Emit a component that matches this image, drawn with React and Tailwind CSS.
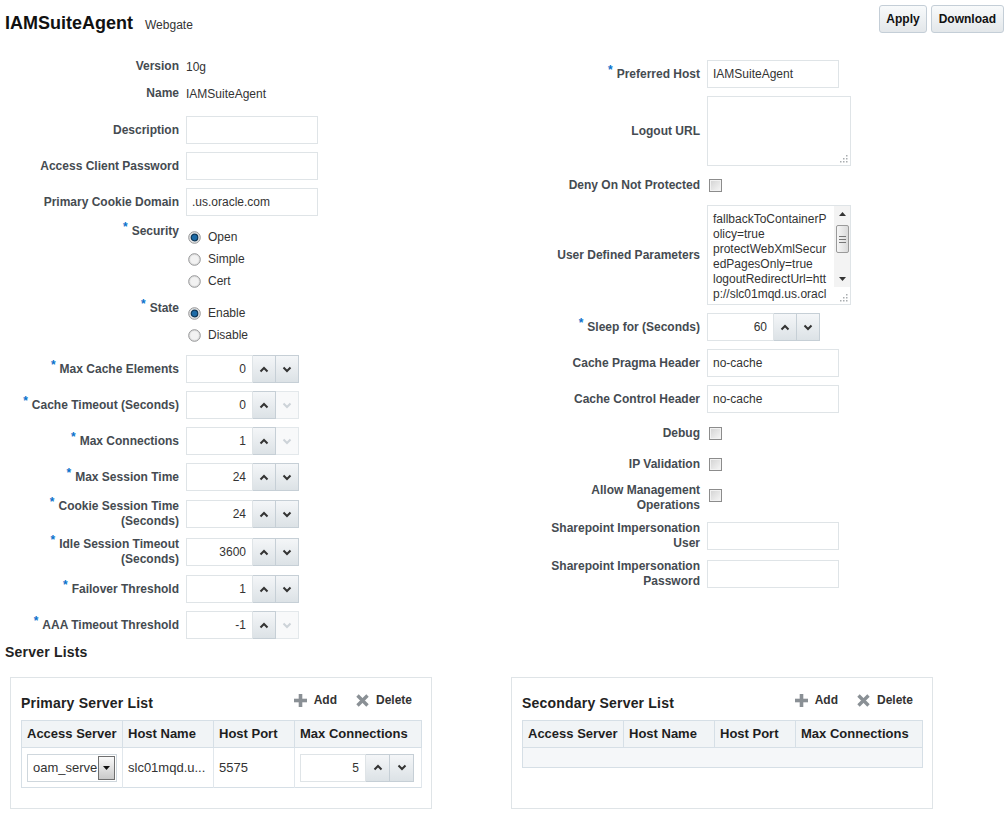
import React from 'react'

const labelCls = 'shrink-0 text-right text-[12px] font-bold leading-[15px] text-[#454b51]'

function Star() {
  return <span className="relative top-[-4px] mr-[4px] text-[12px] leading-[0] font-bold text-[#0b72cc]">*</span>
}

function Row({ label, req, children, lw = 'w-[179px]' }) {
  return (
    <div className="flex items-center py-[4px]">
      <div className={`${lw} ${labelCls}`}>
        {req && <Star />}
        {label}
      </div>
      <div className="ml-[7px]">{children}</div>
    </div>
  )
}

function TextBox({ value = '', w = 'w-[132px]' }) {
  return (
    <input
      readOnly
      defaultValue={value}
      className={`${w} block h-[28px] border border-[#dfe4e7] bg-white px-[5px] text-[12px] text-[#333] outline-none`}
    />
  )
}

function Chevron({ up, color = '#333' }) {
  return (
    <svg width="10" height="7" viewBox="0 0 10 7">
      <path
        d={up ? 'M1.5 5.5 L5 2 L8.5 5.5' : 'M1.5 1.5 L5 5 L8.5 1.5'}
        fill="none"
        stroke={color}
        strokeWidth="2"
      />
    </svg>
  )
}

function Spin({ value, downOff, iw = 'w-[67px]', bw = 'w-[23px]' }) {
  return (
    <div className="flex h-[28px]">
      <input
        readOnly
        defaultValue={value}
        className={`${iw} block h-full border border-[#dfe4e7] bg-white pr-[6px] text-right text-[12px] text-[#333] outline-none`}
      />
      <button className={`${bw} flex h-full items-center justify-center border border-l-0 border-[#c6cfd6] bg-gradient-to-b from-[#f4f6f8] to-[#dce2e6]`}>
        <Chevron up />
      </button>
      {downOff ? (
        <button className={`${bw} flex h-full items-center justify-center border border-l-0 border-[#e3e8eb] bg-[#f8f9fa]`}>
          <Chevron color="#cdd3d8" />
        </button>
      ) : (
        <button className={`${bw} flex h-full items-center justify-center border border-l-0 border-[#c6cfd6] bg-gradient-to-b from-[#f4f6f8] to-[#dce2e6]`}>
          <Chevron />
        </button>
      )}
    </div>
  )
}

function Radio({ on, children }) {
  return (
    <div className="flex h-[22px] items-center pl-[2px]">
      <svg width="13" height="13" viewBox="0 0 13 13">
        <circle cx="6.5" cy="6.5" r="5.8" fill="#e3e3e3" stroke="#959697" strokeWidth="1" />
        <circle cx="6.5" cy="6.5" r="4.2" fill="#f2f2f2" />
        {on && <circle cx="6.5" cy="6.5" r="3.3" fill="#1c6aa6" stroke="#0c3556" strokeWidth="1.2" />}
      </svg>
      <span className="ml-[7px] text-[12px] text-[#333]">{children}</span>
    </div>
  )
}

function Check({ shift }) {
  return (
    <span
      className={`ml-[2px] block h-[13px] w-[13px] border border-[#8c8c8c] bg-gradient-to-br from-[#d2d2d2] to-[#f7f7f7] shadow-[inset_0_0_0_1px_#f2f2f2] ${shift ? 'relative top-[-3px]' : ''}`}
    />
  )
}

function Grip() {
  return (
    <svg width="9" height="9" viewBox="0 0 9 9" className="absolute bottom-[2px] right-[2px]">
      <g fill="#a9adb0">
        <rect x="7" y="1" width="1.5" height="1.5" />
        <rect x="4" y="4" width="1.5" height="1.5" />
        <rect x="7" y="4" width="1.5" height="1.5" />
        <rect x="1" y="7" width="1.5" height="1.5" />
        <rect x="4" y="7" width="1.5" height="1.5" />
        <rect x="7" y="7" width="1.5" height="1.5" />
      </g>
    </svg>
  )
}

const params = [
  'fallbackToContainerP',
  'olicy=true',
  'protectWebXmlSecur',
  'edPagesOnly=true',
  'logoutRedirectUrl=htt',
  'p://slc01mqd.us.oracl',
]

function ParamsArea() {
  return (
    <div className="relative flex h-[100px] w-[144px] border border-[#dfe4e7] bg-white">
      <div className="flex-1 overflow-hidden pl-[5px] pt-[6px] text-[12px] leading-[15px] text-[#333]">
        {params.map((l) => (
          <div key={l} className="whitespace-nowrap">{l}</div>
        ))}
      </div>
      <div className="flex h-[81px] w-[16px] flex-col items-center bg-[#f3f3f3]">
        <div className="flex h-[16px] items-center justify-center">
          <svg width="7" height="4" viewBox="0 0 7 4"><path d="M0 4 L3.5 0 L7 4 Z" fill="#333" /></svg>
        </div>
        <div className="mt-[3px] flex h-[28px] w-[13px] flex-col items-center justify-center gap-[2px] rounded-[2px] border border-[#9a9a9a] bg-gradient-to-r from-[#f6f6f6] to-[#dadada]">
          <span className="h-[1px] w-[7px] bg-[#777]" />
          <span className="h-[1px] w-[7px] bg-[#777]" />
          <span className="h-[1px] w-[7px] bg-[#777]" />
        </div>
        <div className="flex-1" />
        <div className="flex h-[16px] items-center justify-center">
          <svg width="7" height="4" viewBox="0 0 7 4"><path d="M0 0 L3.5 4 L7 0 Z" fill="#333" /></svg>
        </div>
      </div>
      <Grip />
    </div>
  )
}

function PlusIcon() {
  return (
    <svg width="13" height="13" viewBox="0 0 13 13">
      <rect x="4.7" y="0" width="3.6" height="13" fill="#8a9095" />
      <rect x="0" y="4.7" width="13" height="3.6" fill="#8a9095" />
    </svg>
  )
}

function XIcon() {
  return (
    <svg width="13" height="13" viewBox="0 0 13 13">
      <path d="M1.5 1.5 L11.5 11.5 M11.5 1.5 L1.5 11.5" stroke="#8a9095" strokeWidth="3.4" />
    </svg>
  )
}

const cols = ['Access Server', 'Host Name', 'Host Port', 'Max Connections']
const th = 'h-[27px] border-b border-r border-[#d6dfe6] bg-[#f1f4f6] px-[5px] text-left text-[13px] font-bold text-[#1e1e1e] whitespace-nowrap'
const td = 'h-[40px] border-r border-[#e1e7ec] px-[5px] text-[13px] text-[#333]'

function ServerPanel({ title, filled }) {
  return (
    <div className="h-[132px] w-[422px] border border-[#dfe4e7] px-[10px] pt-[16px]">
      <div className="flex h-[26px] items-start justify-between">
        <div className="text-[14px] font-bold leading-[18px] tracking-[0.2px] text-[#222]">{title}</div>
        <div className="mr-[9px] -mt-[1px] flex items-center text-[12px] font-bold leading-[14px] text-[#333]">
          <PlusIcon />
          <span className="ml-[7px]">Add</span>
          <span className="ml-[19px]"><XIcon /></span>
          <span className="ml-[7px]">Delete</span>
        </div>
      </div>
      <table className="w-[400px] table-fixed border-collapse border border-[#d6dfe6]">
        <colgroup>
          <col className="w-[101px]" />
          <col className="w-[91px]" />
          <col className="w-[81px]" />
          <col className="w-[127px]" />
        </colgroup>
        <thead>
          <tr>
            {cols.map((c) => (
              <th key={c} className={th}>{c}</th>
            ))}
          </tr>
        </thead>
        <tbody>
          {filled ? (
            <tr className="bg-white">
              <td className={td}>
                <div className="flex h-[28px] w-[90px] items-center border border-[#cfd7dd] bg-white pl-[5px] pr-[1px]">
                  <span className="flex-1 overflow-hidden whitespace-nowrap">oam_serve</span>
                  <span className="flex h-[24px] w-[17px] items-center justify-center border border-[#6f6f6f] bg-gradient-to-b from-[#fafafa] to-[#c9c9c9]">
                    <svg width="7" height="4" viewBox="0 0 7 4"><path d="M0 0 L3.5 4 L7 0 Z" fill="#111" /></svg>
                  </span>
                </div>
              </td>
              <td className={td}>slc01mqd.u...</td>
              <td className={td}>5575</td>
              <td className={td}>
                <Spin value="5" iw="w-[66px]" bw="w-[24px]" />
              </td>
            </tr>
          ) : (
            <tr>
              <td colSpan={4} className="h-[20px] bg-[#f5f7f9]" />
            </tr>
          )}
        </tbody>
      </table>
    </div>
  )
}

export default function App() {
  return (
    <div className="min-h-[818px] bg-white font-['Liberation_Sans',Arial,sans-serif] text-[#333]">
      {/* title bar */}
      <div className="flex justify-between pl-[5px] pr-[3px] pt-[5px]">
        <div className="mt-[8px] flex items-baseline">
          <h1 className="text-[18px] font-bold leading-[21px] text-[#111]">IAMSuiteAgent</h1>
          <span className="ml-[12px] text-[12px] text-[#333]">Webgate</span>
        </div>
        <div className="flex gap-[4px]">
          <button className="h-[28px] rounded-[3px] border border-[#c4ced7] bg-gradient-to-b from-[#f8fafb] to-[#e3e7ea] px-[6px] text-[12px] font-bold text-[#111]">
            Apply
          </button>
          <button className="h-[28px] rounded-[3px] border border-[#c4ced7] bg-gradient-to-b from-[#f8fafb] to-[#e3e7ea] px-[7px] text-[12px] font-bold text-[#111]">
            Download
          </button>
        </div>
      </div>

      <div className="mt-[19px] flex">
        {/* left column */}
        <div className="w-[520px] shrink-0">
          <div className="flex h-[27px] items-center">
            <div className={`w-[179px] ${labelCls}`}>Version</div>
            <div className="ml-[7px] text-[12px]">10g</div>
          </div>
          <div className="flex h-[27px] items-center">
            <div className={`w-[179px] ${labelCls}`}>Name</div>
            <div className="ml-[7px] text-[12px]">IAMSuiteAgent</div>
          </div>
          <div className="mt-[5px]">
            <Row label="Description"><TextBox /></Row>
            <Row label="Access Client Password"><TextBox /></Row>
            <Row label="Primary Cookie Domain"><TextBox value=".us.oracle.com" /></Row>
          </div>

          <div className="flex items-start pb-[4px] pt-[6px]">
            <div className={`-mt-[2px] w-[179px] ${labelCls}`}><Star />Security</div>
            <div className="ml-[7px]">
              <Radio on>Open</Radio>
              <Radio>Simple</Radio>
              <Radio>Cert</Radio>
            </div>
          </div>
          <div className="flex items-start pb-[5px] pt-[6px]">
            <div className={`-mt-[1px] w-[179px] ${labelCls}`}><Star />State</div>
            <div className="ml-[7px]">
              <Radio on>Enable</Radio>
              <Radio>Disable</Radio>
            </div>
          </div>

          <Row req label="Max Cache Elements"><Spin value="0" /></Row>
          <Row req label="Cache Timeout (Seconds)"><Spin value="0" downOff /></Row>
          <Row req label="Max Connections"><Spin value="1" downOff /></Row>
          <Row req label="Max Session Time"><Spin value="24" /></Row>
          <Row req label={<>Cookie Session Time<br />(Seconds)</>}><Spin value="24" /></Row>
          <Row req label={<>Idle Session Timeout<br />(Seconds)</>}><Spin value="3600" /></Row>
          <Row req label="Failover Threshold"><Spin value="1" /></Row>
          <Row req label="AAA Timeout Threshold"><Spin value="-1" downOff /></Row>
        </div>

        {/* right column */}
        <div className="flex-1 pt-[3px]">
          <Row lw="w-[180px]" req label="Preferred Host"><TextBox value="IAMSuiteAgent" /></Row>
          <Row lw="w-[180px]" label="Logout URL">
            <div className="relative h-[70px] w-[144px] border border-[#dfe4e7] bg-white">
              <Grip />
            </div>
          </Row>
          <div className="flex h-[31px] items-center">
            <div className={`w-[180px] ${labelCls}`}>Deny On Not Protected</div>
            <div className="ml-[7px]"><Check /></div>
          </div>
          <Row lw="w-[180px]" label="User Defined Parameters"><ParamsArea /></Row>
          <Row lw="w-[180px]" req label="Sleep for (Seconds)"><Spin value="60" /></Row>
          <Row lw="w-[180px]" label="Cache Pragma Header"><TextBox value="no-cache" /></Row>
          <Row lw="w-[180px]" label="Cache Control Header"><TextBox value="no-cache" /></Row>
          <div className="flex h-[32px] items-center">
            <div className={`w-[180px] ${labelCls}`}>Debug</div>
            <div className="ml-[7px]"><Check /></div>
          </div>
          <div className="flex h-[30px] items-center">
            <div className={`w-[180px] ${labelCls}`}>IP Validation</div>
            <div className="ml-[7px]"><Check /></div>
          </div>
          <div className="flex items-center py-[4px]">
            <div className={`w-[180px] ${labelCls}`}>Allow Management<br />Operations</div>
            <div className="ml-[7px]"><Check shift /></div>
          </div>
          <Row lw="w-[180px]" label={<>Sharepoint Impersonation<br />User</>}><TextBox /></Row>
          <Row lw="w-[180px]" label={<>Sharepoint Impersonation<br />Password</>}><TextBox /></Row>
        </div>
      </div>

      {/* server lists */}
      <div className="ml-[5px] mt-[1px] h-[17px] text-[14px] font-bold leading-[17px] tracking-[0.2px] text-[#222]">
        Server Lists
      </div>
      <div className="ml-[10px] mt-[16px] flex gap-[79px]">
        <ServerPanel title="Primary Server List" filled />
        <ServerPanel title="Secondary Server List" />
      </div>
    </div>
  )
}
